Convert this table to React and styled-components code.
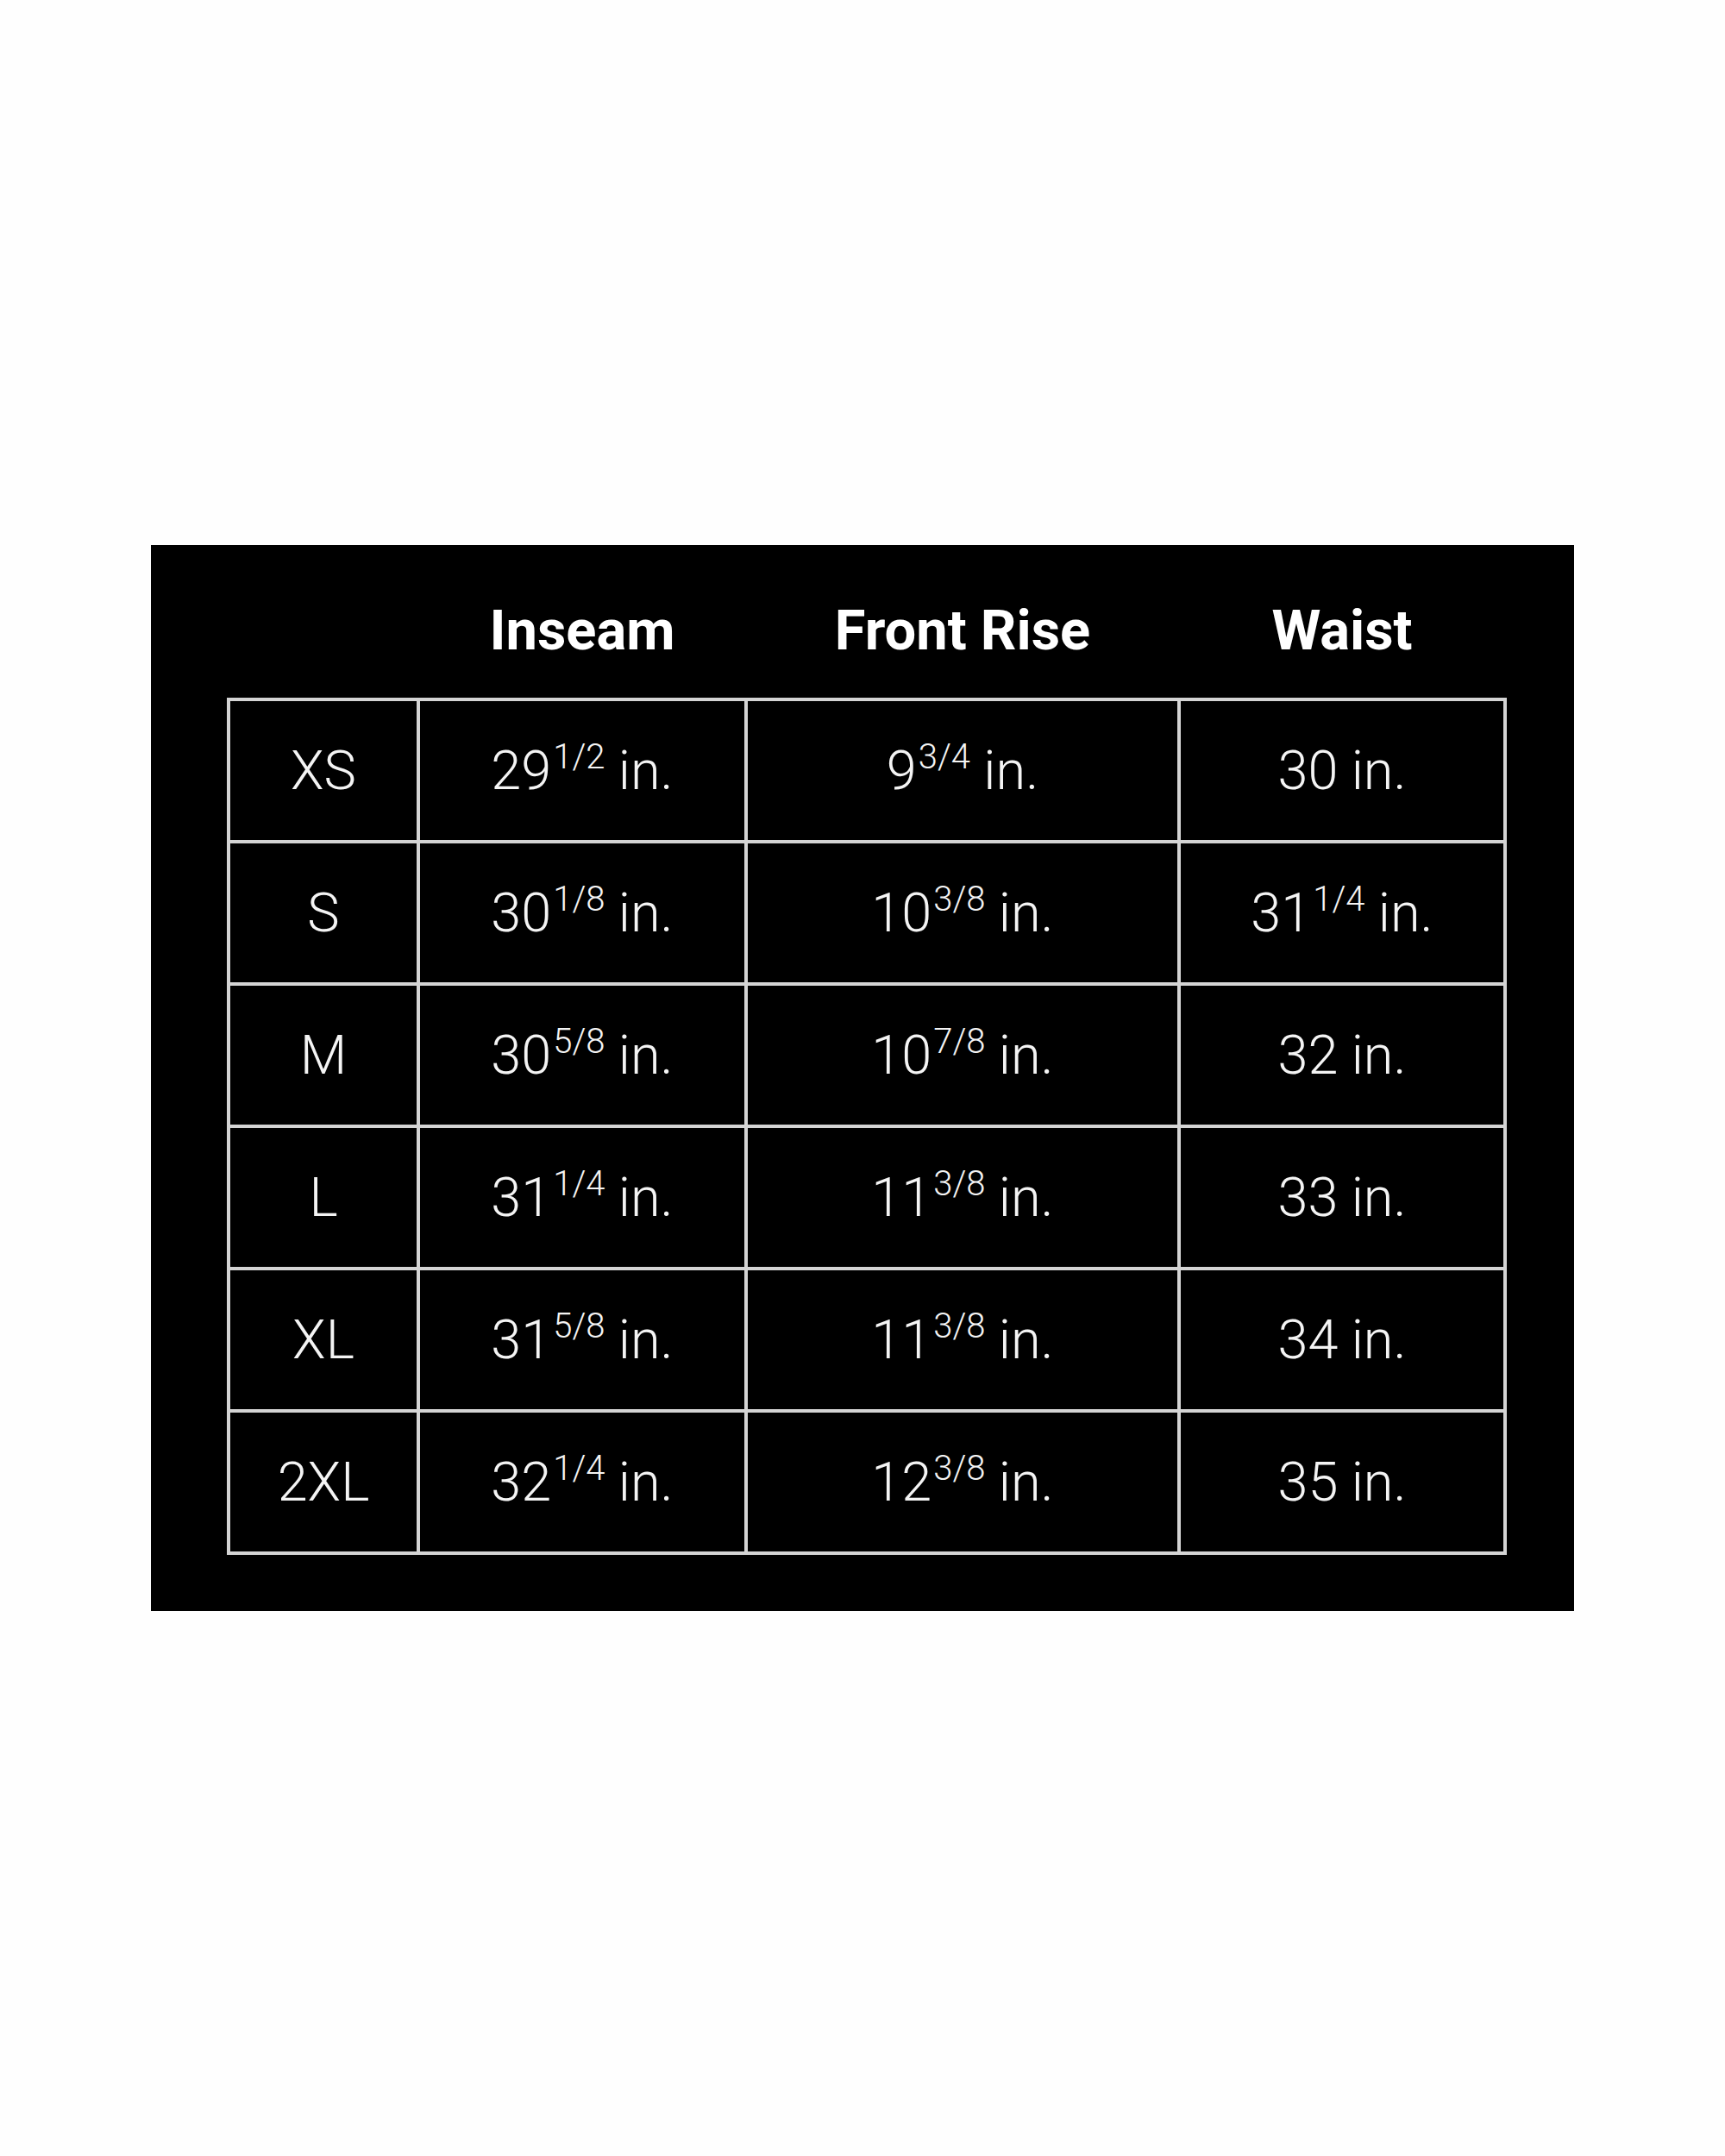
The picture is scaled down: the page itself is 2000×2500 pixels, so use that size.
import React from "react"
import styled, { createGlobalStyle } from "styled-components"

const GlobalStyle = createGlobalStyle`
   html, body {
      margin: 0;
      padding: 0;
      background: #fefefe;
   }
   body {
      font-family: Roboto, "Liberation Sans", Arial, sans-serif;
   }
`

const columns = "216px 376px 498px 374px"

const headers = ["Inseam", "Front Rise", "Waist"]

const rows = [
   { size: "XS", inseam: ["29", "1/2"], rise: ["9", "3/4"], waist: ["30", null] },
   { size: "S", inseam: ["30", "1/8"], rise: ["10", "3/8"], waist: ["31", "1/4"] },
   { size: "M", inseam: ["30", "5/8"], rise: ["10", "7/8"], waist: ["32", null] },
   { size: "L", inseam: ["31", "1/4"], rise: ["11", "3/8"], waist: ["33", null] },
   { size: "XL", inseam: ["31", "5/8"], rise: ["11", "3/8"], waist: ["34", null] },
   { size: "2XL", inseam: ["32", "1/4"], rise: ["12", "3/8"], waist: ["35", null] },
]

function Measure({ value }) {
   const [whole, fraction] = value
   return (
      <Value>
         {whole}
         {fraction && <Sup>{fraction}</Sup>} in.
      </Value>
   )
}

function App() {
   return (
      <Page>
         <GlobalStyle />
         <Board>
            <HeaderRow>
               <span />
               {headers.map((h) => (
                  <HeaderCell key={h}>{h}</HeaderCell>
               ))}
            </HeaderRow>
            <Grid>
               {rows.map((r) => (
                  <React.Fragment key={r.size}>
                     <Cell>{r.size}</Cell>
                     <Cell>
                        <Measure value={r.inseam} />
                     </Cell>
                     <Cell>
                        <Measure value={r.rise} />
                     </Cell>
                     <Cell>
                        <Measure value={r.waist} />
                     </Cell>
                  </React.Fragment>
               ))}
            </Grid>
         </Board>
      </Page>
   )
}
export default App

const Page = styled.div`
   width: 2000px;
   height: 2500px;
   box-sizing: border-box;
   padding: 632px 0 0 175px;
`
const Board = styled.div`
   width: 1650px;
   box-sizing: border-box;
   background: #000000;
   padding: 0 0 65px 88px;
`
const HeaderRow = styled.div`
   display: grid;
   grid-template-columns: ${columns};
   column-gap: 4px;
   padding: 22px 4px 0;
   height: 177px;
   box-sizing: border-box;
   align-items: center;
`
const HeaderCell = styled.div`
   color: #ffffff;
   font-weight: 700;
   font-size: 65px;
   text-align: center;
   line-height: 1;
`
const Grid = styled.div`
   display: inline-grid;
   grid-template-columns: ${columns};
   grid-auto-rows: 161px;
   gap: 4px;
   padding: 4px;
   background: #d4d4d4;
`
const Cell = styled.div`
   background: #000000;
   color: #f4f4f4;
   font-weight: 300;
   font-size: 63px;
   line-height: 1;
   display: flex;
   align-items: center;
   justify-content: center;
`
const Value = styled.span`
   white-space: pre;
`
const Sup = styled.span`
   font-size: 40px;
   vertical-align: 24px;
   line-height: 0;
   margin-left: 2px;
`
